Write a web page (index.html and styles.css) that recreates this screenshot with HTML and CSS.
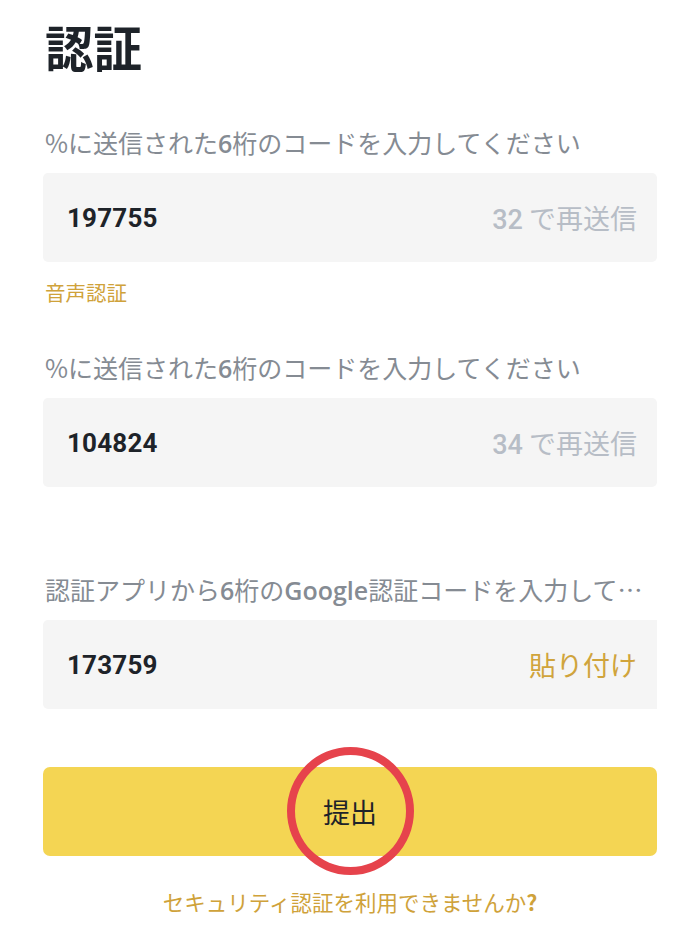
FILE: index.html
```html
<!DOCTYPE html>
<html lang="ja">
<head>
<meta charset="utf-8">
<title>認証</title>
<link rel="stylesheet" href="styles.css">
</head>
<body>
<main class="page">
  <h1 class="title">認証</h1>

  <div class="label">%に送信された<span class="lat">6</span>桁のコードを入力してください</div>
  <div class="field">
    <span class="code">197755</span>
    <span class="resend"><span class="num">32</span> で再送信</span>
  </div>
  <div class="voice">音声認証</div>

  <div class="label label-2">%に送信された<span class="lat">6</span>桁のコードを入力してください</div>
  <div class="field">
    <span class="code">104824</span>
    <span class="resend"><span class="num">34</span> で再送信</span>
  </div>

  <div class="label label-3">認証アプリから<span class="lat">6</span>桁の<span class="lat">Google</span>認証コードを入力して…</div>
  <div class="field field-flat">
    <span class="code">173759</span>
    <span class="paste">貼り付け</span>
  </div>

  <button class="submit">提出<span class="ring"></span></button>

  <div class="help">セキュリティ認証を利用できませんか<span class="lat">?</span></div>
</main>
</body>
</html>
```

FILE: styles.css
```css
html, body {
  margin: 0;
  padding: 0;
  background: #ffffff;
}

body {
  font-family: "Noto Sans CJK JP", "Noto Sans", sans-serif;
  width: 700px;
  height: 940px;
  overflow: hidden;
}

.page {
  padding: 0 43px;
  display: flex;
  flex-direction: column;
}

.title {
  margin: 18px 0 0 2px;
  font-size: 48.5px;
  line-height: 56px;
  font-weight: 700;
  color: #1e2329;
}

.label {
  margin: 52px 0 0 2px;
  font-size: 25px;
  line-height: 32px;
  color: #858b93;
  white-space: nowrap;
}

.label .lat {
  font-weight: 600;
  font-family: "Open Sans", "Noto Sans CJK JP", sans-serif;
}

.label-2 {
  margin-top: 45px;
}

.label-3 {
  margin-top: 86px;
}

.field {
  margin-top: 14px;
  height: 89px;
  background: #f5f5f5;
  border-radius: 5px;
  display: flex;
  align-items: center;
  justify-content: space-between;
  padding: 0 20px 0 24px;
}

.field-flat {
  border-radius: 5px 0 0 5px;
  margin-top: 14px;
}

.code {
  font-family: Roboto, "Noto Sans", sans-serif;
  font-size: 26px;
  font-weight: 700;
  color: #1e2329;
  letter-spacing: 0.2px;
}

.resend {
  font-size: 27px;
  color: #b7bdc6;
}

.resend .num {
  font-family: Roboto, "Noto Sans", sans-serif;
  font-weight: 500;
}

.paste {
  font-size: 27px;
  color: #d0a43c;
}

.voice {
  margin: 16px 0 0 2px;
  font-size: 20.5px;
  line-height: 28px;
  color: #cfa23a;
}

.submit {
  position: relative;
  margin-top: 58px;
  height: 89px;
  border: 0;
  border-radius: 7px;
  background: #f4d553;
  font-family: "Noto Sans CJK JP", sans-serif;
  font-size: 27px;
  color: #1e2329;
  padding: 0;
}

.ring {
  position: absolute;
  left: 244px;
  top: -20px;
  width: 127px;
  height: 128px;
  box-sizing: border-box;
  border: 8px solid #e6434c;
  border-radius: 50%;
}

.help {
  margin-top: 32px;
  text-align: center;
  font-size: 21.5px;
  line-height: 28px;
  color: #cfa23a;
}

.help .lat {
  font-weight: 700;
}
```
